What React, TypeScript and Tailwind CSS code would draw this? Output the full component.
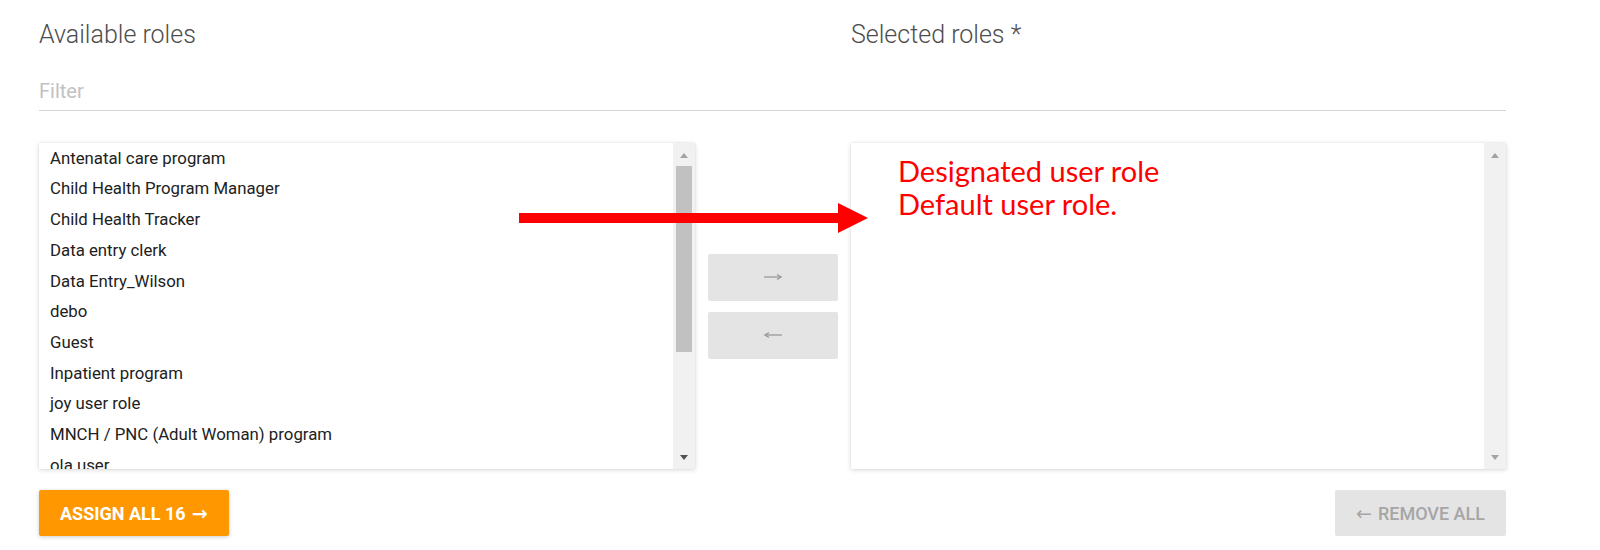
import type { ReactNode } from 'react'

const roles = [
  'Antenatal care program',
  'Child Health Program Manager',
  'Child Health Tracker',
  'Data entry clerk',
  'Data Entry_Wilson',
  'debo',
  'Guest',
  'Inpatient program',
  'joy user role',
  'MNCH / PNC (Adult Woman) program',
  'ola user',
]

function Scrollbar({ thumb, downDark }: { thumb?: boolean; downDark?: boolean }) {
  return (
    <div className="w-[22px] h-full bg-[#f1f1f1] flex flex-col shrink-0">
      <div className="h-[23px] pt-[1px] flex items-center justify-center">
        <div className="w-0 h-0 border-x-[4.5px] border-x-transparent border-b-[5px] border-b-[#a3a3a3]" />
      </div>
      <div className="flex-1 px-[3px]">
        {thumb && <div className="h-[186px] bg-[#c1c1c1]" />}
      </div>
      <div className="h-[22px] pb-[2px] flex items-center justify-center">
        <div
          className={
            downDark
              ? 'w-0 h-0 border-x-[4.5px] border-x-transparent border-t-[5px] border-t-[#505050]'
              : 'w-0 h-0 border-x-[4.5px] border-x-transparent border-t-[5px] border-t-[#a3a3a3]'
          }
        />
      </div>
    </div>
  )
}

function Box({ children, thumb, downDark }: { children?: ReactNode; thumb?: boolean; downDark?: boolean }) {
  return (
    <div className="h-[326px] bg-white flex shadow-[0_1px_5px_rgba(0,0,0,0.14),0_0_2px_rgba(0,0,0,0.08)] overflow-hidden">
      <div className="flex-1 min-w-0 overflow-hidden">{children}</div>
      <Scrollbar thumb={thumb} downDark={downDark} />
    </div>
  )
}

function LineArrow({ left }: { left?: boolean }) {
  return (
    <svg width="18" height="8" viewBox="0 0 18 8" className={left ? 'rotate-180' : ''}>
      <line x1="0" y1="4" x2="16" y2="4" stroke="#9a9a9a" strokeWidth="1.3" />
      <polyline points="13,1.5 17,4 13,6.5" fill="none" stroke="#9a9a9a" strokeWidth="1.3" />
    </svg>
  )
}

export default function App() {
  return (
    <div className="relative w-[1600px] h-[550px] bg-white pt-[21px] pl-[39px] font-['Roboto',sans-serif]">
      <div className="grid grid-cols-[656px_156px_655px] h-[28px] text-[25px] leading-[28px] font-light text-[#4d4d4d]">
        <div>Available roles</div>
        <div />
        <div>Selected roles *</div>
      </div>

      <div className="mt-[30px] w-[1467px] pb-[7px] border-b border-[#d4d4d4]">
        <div className="h-[24px] text-[20px] leading-[24px] text-[#c2c2c2]">Filter</div>
      </div>

      <div className="mt-[32px] grid grid-cols-[656px_156px_655px]">
        <Box thumb downDark>
          {roles.map((r) => (
            <div key={r} className="h-[30.7px] pl-[11px] flex items-center text-[16.8px] text-[#212121] whitespace-nowrap">
              {r}
            </div>
          ))}
        </Box>

        <div className="flex flex-col items-center justify-center gap-[11px]">
          <button className="w-[130px] h-[47px] rounded-[2px] bg-[#e4e4e4] flex items-center justify-center">
            <LineArrow />
          </button>
          <button className="w-[130px] h-[47px] rounded-[2px] bg-[#e4e4e4] flex items-center justify-center">
            <LineArrow left />
          </button>
        </div>

        <Box>
          <div className="pl-[47px] pt-[11px] font-['Lato',sans-serif] text-[29px] leading-[33px] text-[#ff0000]">
            <div>Designated user role</div>
            <div>Default user role.</div>
          </div>
        </Box>
      </div>

      <div className="mt-[21px] w-[1467px] flex justify-between">
        <button className="h-[46px] px-[21px] rounded-[2px] bg-[#ff9800] text-white text-[18px] font-bold shadow-[0_1px_4px_rgba(0,0,0,0.2)] flex items-center">
          ASSIGN ALL 16
          <span className="ml-[6px] font-['DejaVu_Sans',sans-serif] text-[19px] leading-none">→</span>
        </button>
        <button className="h-[46px] px-[21px] rounded-[2px] bg-[#e4e4e4] text-[#a6a6a6] text-[18px] font-medium flex items-center">
          <span className="mr-[6px] font-['DejaVu_Sans',sans-serif] text-[19px] leading-none">←</span>
          REMOVE ALL
        </button>
      </div>

      <svg className="absolute left-[519px] top-[203px]" width="350" height="30" viewBox="0 0 350 30">
        <rect x="0" y="10" width="320" height="10" fill="#ff0000" />
        <polygon points="319,0 349,15 319,30" fill="#ff0000" />
      </svg>
    </div>
  )
}
